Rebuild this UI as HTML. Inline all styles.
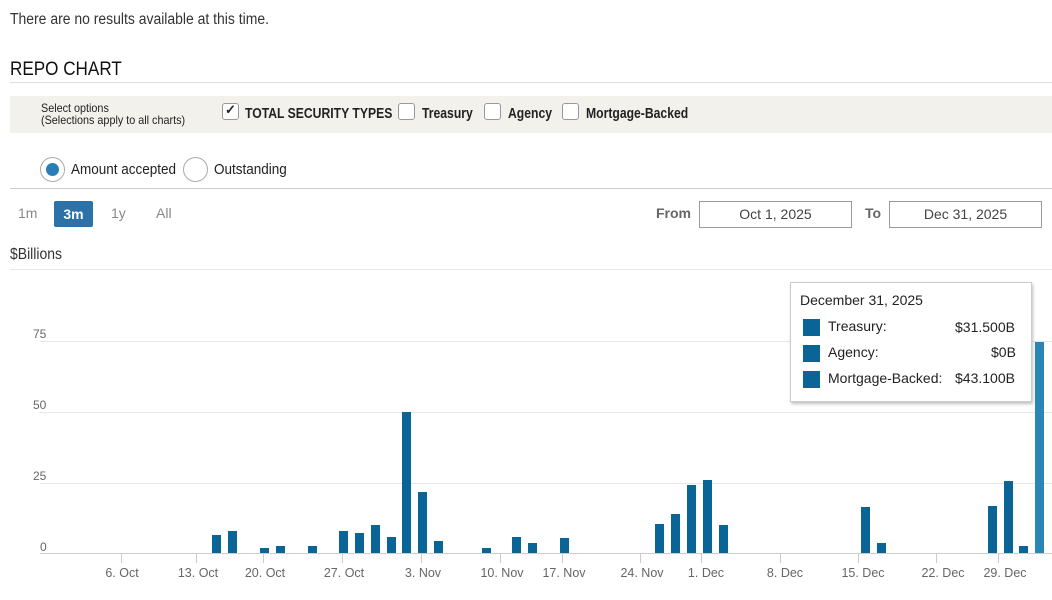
<!DOCTYPE html>
<html><head><meta charset="utf-8"><style>
*{margin:0;padding:0;box-sizing:border-box}
body{width:1052px;height:600px;background:#fff;font-family:"Liberation Sans",sans-serif;color:#222;position:relative;overflow:hidden}
.a{position:absolute;white-space:nowrap}
.n{transform:scaleX(.9);transform-origin:left top}
.nb{transform:scaleX(.84);transform-origin:left top}
.b{position:absolute;width:9px;background:#0b6496}
.g{position:absolute;left:40px;right:0;height:1px;background:#e6e6e6}
.yl{position:absolute;left:33px;font-size:12px;color:#666}
.xl{position:absolute;top:566px;font-size:12.5px;color:#666;transform:translateX(-50%)}
.tk{position:absolute;top:553px;width:1px;height:10px;background:#ccc}
.cb{position:absolute;width:17px;height:17px;border:1px solid #999;border-radius:3px;background:#fff}
.sq{display:inline-block;width:17px;height:17px;background:#0b6496;vertical-align:middle;margin-right:8px}
</style></head><body>
<div class="a n" style="left:10px;top:11px;font-size:15.5px;color:#333">There are no results available at this time.</div>
<div class="a n" style="left:10px;top:59px;font-size:19px;color:#111">REPO CHART</div>
<div class="a" style="left:10px;top:82px;width:1042px;height:1px;background:#ddd"></div>
<div class="a" style="left:10px;top:96px;width:1042px;height:37px;background:#f3f1ec"></div>
<div class="a n" style="left:41px;top:103px;font-size:12px;line-height:11.5px;color:#222">Select options<br>(Selections apply to all charts)</div>
<div class="cb" style="left:222px;top:103px"></div><div class="a" style="left:225px;top:102px;font-size:13px;font-weight:bold">✓</div>
<div class="a nb" style="left:245px;top:106px;font-size:14.5px;font-weight:bold">TOTAL SECURITY TYPES</div>
<div class="cb" style="left:398px;top:103px"></div><div class="a nb" style="left:422px;top:106px;font-size:14.5px;font-weight:bold">Treasury</div>
<div class="cb" style="left:484px;top:103px"></div><div class="a nb" style="left:508px;top:106px;font-size:14.5px;font-weight:bold">Agency</div>
<div class="cb" style="left:562px;top:103px"></div><div class="a nb" style="left:586px;top:106px;font-size:14.5px;font-weight:bold">Mortgage-Backed</div>
<div class="a" style="left:40px;top:157px;width:25px;height:25px;border:1px solid #aaa;border-radius:50%"></div>
<div class="a" style="left:46px;top:163px;width:13px;height:13px;background:#2a7db5;border-radius:50%"></div>
<div class="a n" style="left:71px;top:161px;font-size:15px">Amount accepted</div>
<div class="a" style="left:183px;top:157px;width:25px;height:25px;border:1px solid #aaa;border-radius:50%"></div>
<div class="a n" style="left:214px;top:161px;font-size:15px">Outstanding</div>
<div class="a" style="left:10px;top:188px;width:1042px;height:1px;background:#ccc"></div>
<div class="a" style="left:18px;top:205px;font-size:14px;color:#888">1m</div>
<div class="a" style="left:54px;top:201px;width:39px;height:26px;background:#2c72a8;border-radius:2px;color:#fff;font-weight:bold;font-size:14px;text-align:center;line-height:26px">3m</div>
<div class="a" style="left:111px;top:205px;font-size:14px;color:#888">1y</div>
<div class="a" style="left:156px;top:205px;font-size:14px;color:#888">All</div>
<div class="a" style="left:656px;top:205px;font-size:14px;font-weight:bold;color:#666">From</div>
<div class="a" style="left:699px;top:201px;width:153px;height:27px;border:1px solid #999;font-size:14px;color:#444;text-align:center;line-height:25px">Oct 1, 2025</div>
<div class="a" style="left:865px;top:205px;font-size:14px;font-weight:bold;color:#666">To</div>
<div class="a" style="left:889px;top:201px;width:153px;height:27px;border:1px solid #999;font-size:14px;color:#444;text-align:center;line-height:25px">Dec 31, 2025</div>
<div class="a n" style="left:10px;top:246px;font-size:15.5px;color:#333">$Billions</div>
<div class="g" style="top:269px;left:10px"></div>
<div class="g" style="top:341px"></div>
<div class="g" style="top:412px"></div>
<div class="g" style="top:483px"></div>
<div class="a" style="left:40px;top:553px;right:0;height:1px;background:#ccc"></div>
<div class="yl" style="top:327px">75</div>
<div class="yl" style="top:398px">50</div>
<div class="yl" style="top:469px">25</div>
<div class="yl" style="top:540px;left:40px">0</div>
<div class="b" style="left:212px;top:535px;height:18px"></div>
<div class="b" style="left:228px;top:531px;height:22px"></div>
<div class="b" style="left:260px;top:548px;height:5px"></div>
<div class="b" style="left:276px;top:546px;height:7px"></div>
<div class="b" style="left:308px;top:546px;height:7px"></div>
<div class="b" style="left:339px;top:531px;height:22px"></div>
<div class="b" style="left:355px;top:533px;height:20px"></div>
<div class="b" style="left:371px;top:525px;height:28px"></div>
<div class="b" style="left:387px;top:537px;height:16px"></div>
<div class="b" style="left:402px;top:412px;height:141px"></div>
<div class="b" style="left:418px;top:492px;height:61px"></div>
<div class="b" style="left:434px;top:541px;height:12px"></div>
<div class="b" style="left:482px;top:548px;height:5px"></div>
<div class="b" style="left:512px;top:537px;height:16px"></div>
<div class="b" style="left:528px;top:543px;height:10px"></div>
<div class="b" style="left:560px;top:538px;height:15px"></div>
<div class="b" style="left:655px;top:524px;height:29px"></div>
<div class="b" style="left:671px;top:514px;height:39px"></div>
<div class="b" style="left:687px;top:485px;height:68px"></div>
<div class="b" style="left:703px;top:480px;height:73px"></div>
<div class="b" style="left:719px;top:525px;height:28px"></div>
<div class="b" style="left:861px;top:507px;height:46px"></div>
<div class="b" style="left:877px;top:543px;height:10px"></div>
<div class="b" style="left:988px;top:506px;height:47px"></div>
<div class="b" style="left:1004px;top:481px;height:72px"></div>
<div class="b" style="left:1019px;top:546px;height:7px"></div>
<div class="b" style="left:1035px;top:342px;height:211px;background:#2a86b5"></div>
<div class="tk" style="left:121px"></div><div class="xl" style="left:122px">6. Oct</div>
<div class="tk" style="left:196px"></div><div class="xl" style="left:198px">13. Oct</div>
<div class="tk" style="left:263px"></div><div class="xl" style="left:265px">20. Oct</div>
<div class="tk" style="left:342px"></div><div class="xl" style="left:344px">27. Oct</div>
<div class="tk" style="left:421px"></div><div class="xl" style="left:423px">3. Nov</div>
<div class="tk" style="left:500px"></div><div class="xl" style="left:502px">10. Nov</div>
<div class="tk" style="left:562px"></div><div class="xl" style="left:564px">17. Nov</div>
<div class="tk" style="left:640px"></div><div class="xl" style="left:642px">24. Nov</div>
<div class="tk" style="left:701px"></div><div class="xl" style="left:706px">1. Dec</div>
<div class="tk" style="left:780px"></div><div class="xl" style="left:785px">8. Dec</div>
<div class="tk" style="left:858px"></div><div class="xl" style="left:863px">15. Dec</div>
<div class="tk" style="left:936px"></div><div class="xl" style="left:943px">22. Dec</div>
<div class="tk" style="left:998px"></div><div class="xl" style="left:1005px">29. Dec</div>
<div class="a" style="left:790px;top:282px;width:242px;height:120px;background:#fff;border:1px solid #ccc;box-shadow:1px 2px 3px rgba(0,0,0,.25)"></div>
<div class="a" style="left:800px;top:292px;font-size:14px;color:#222">December 31, 2025</div>
<div class="a" style="left:803px;top:318px;font-size:14px;color:#222"><span class="sq"></span>Treasury:</div>
<div class="a" style="left:955px;top:319px;font-size:14px;color:#222">$31.500B</div>
<div class="a" style="left:803px;top:344px;font-size:14px;color:#222"><span class="sq"></span>Agency:</div>
<div class="a" style="left:991px;top:344px;font-size:14px;color:#222">$0B</div>
<div class="a" style="left:803px;top:370px;font-size:14px;color:#222"><span class="sq"></span>Mortgage-Backed:</div>
<div class="a" style="left:955px;top:370px;font-size:14px;color:#222">$43.100B</div>
</body></html>
